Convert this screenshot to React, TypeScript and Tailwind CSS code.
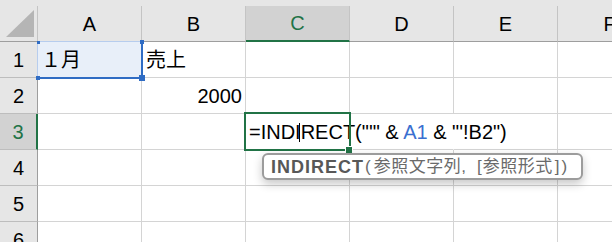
const cols = ["A", "B", "C", "D", "E", "F"];
const rows = [1, 2, 3, 4, 5, 6];

function Cell({ r, c }: { r: number; c: string }) {
  let content: React.ReactNode = null;
  let cls = "border-r border-b border-[#d4d4d4] flex items-end pb-[5px] leading-[23px] whitespace-nowrap";

  if (r === 1 && c === "A") {
    cls += " bg-[#e8eff9] pl-[3px]";
    content = "１月";
  } else if (r === 1 && c === "B") {
    cls += " pl-[4px]";
    content = "売上";
  } else if (r === 2 && c === "B") {
    cls += " justify-end pr-[3px]";
    content = "2000";
  } else if (r === 3 && c === "C") {
    cls += " pl-[3px] overflow-visible";
    content = (
      <span>
        =INDIRECT("'" &amp; <span className="text-[#3a6fd0]">A1</span> &amp; "'!B2")
      </span>
    );
  } else if (r === 3 && c === "D") {
    cls += " border-r-transparent";
  }

  return <div className={cls}>{content}</div>;
}

export default function App() {
  return (
    <div className="relative w-[612px] h-[242px] overflow-hidden bg-white text-[20px] text-black font-['Liberation_Sans','Noto_Sans_CJK_JP',sans-serif]">
      <div className="h-[6px] bg-[#e6e6e6]" />
      <div className="grid grid-cols-[38px_repeat(6,104px)] grid-rows-[36px_repeat(6,36px)]">
        {/* corner */}
        <div className="bg-[#e6e6e6] border-r border-b border-r-[#c4c4c4] border-b-[#9e9e9e]">
          <svg width="37" height="35" viewBox="0 0 37 35">
            <polygon points="34,4 6,31 34,31" fill="#b5b5b5" />
          </svg>
        </div>
        {cols.map((c) => (
          <div
            key={c}
            className={
              c === "C"
                ? "bg-[#d2d2d2] text-[#217346] border-r border-r-[#c4c4c4] border-b-2 border-b-[#217346] flex items-center justify-center"
                : "bg-[#e6e6e6] border-r border-b border-r-[#c4c4c4] border-b-[#9e9e9e] flex items-center justify-center"
            }
          >
            {c}
          </div>
        ))}
        {rows.map((r) => (
          <div key={r} className="contents">
            <div
              className={
                r === 3
                  ? "bg-[#d2d2d2] text-[#217346] border-r-2 border-r-[#217346] border-b border-b-[#bdbdbd] flex items-center justify-center"
                  : "bg-[#e6e6e6] border-r border-b border-r-[#9e9e9e] border-b-[#bdbdbd] flex items-center justify-center"
              }
            >
              {r}
            </div>
            {cols.map((c) => (
              <Cell key={c} r={r} c={c} />
            ))}
          </div>
        ))}
      </div>

      {/* A1 reference highlight */}
      <div className="absolute left-[37px] top-[41px] w-[106px] h-[38px] border-t border-l border-[#b7cdee] border-r-2 border-b-2 border-r-[#2f6cc4] border-b-[#2f6cc4]">
        <div className="absolute -left-px -top-px w-[3px] h-[3px] bg-[#2f6cc4]" />
        <div className="absolute -right-[3px] -top-[2px] w-[4px] h-[4px] bg-[#2f6cc4]" />
        <div className="absolute -left-[2px] -bottom-[3px] w-[4px] h-[4px] bg-[#2f6cc4]" />
        <div className="absolute -right-[4px] -bottom-[4px] w-[6px] h-[6px] bg-[#2f6cc4]" />
      </div>

      {/* C3 active cell */}
      <div className="absolute left-[244px] top-[112px] w-[107px] h-[39px] border-2 border-[#217346]">
        <div className="absolute -right-[4px] -bottom-[5px] w-[8px] h-[8px] bg-[#217346] border border-white" />
      </div>

      {/* caret */}
      <div className="absolute left-[299px] top-[123px] w-px h-[19px] bg-black" />

      {/* function tooltip */}
      <div className="absolute left-[262px] top-[153px] w-[321px] h-[27px] bg-white border-2 border-[#9c9c9c] rounded-[6px] shadow-[0_4px_10px_rgba(0,0,0,0.22)] flex items-center px-[7px] text-[17px] leading-[20px] whitespace-nowrap text-[#6a6a6a]">
        <span className="font-bold text-[#585858] text-[18px] tracking-[1px]">INDIRECT</span>
        <span className="ml-[1px] mr-[3px]">(</span>
        <span className="tracking-[0.5px]">参照文字列</span>
        <span>,</span>
        <span className="ml-[11px] mr-[1px]">[</span>
        <span className="tracking-[0.5px]">参照形式</span>
        <span className="ml-[2px]">]</span>
        <span className="ml-[2px]">)</span>
      </div>
    </div>
  );
}
